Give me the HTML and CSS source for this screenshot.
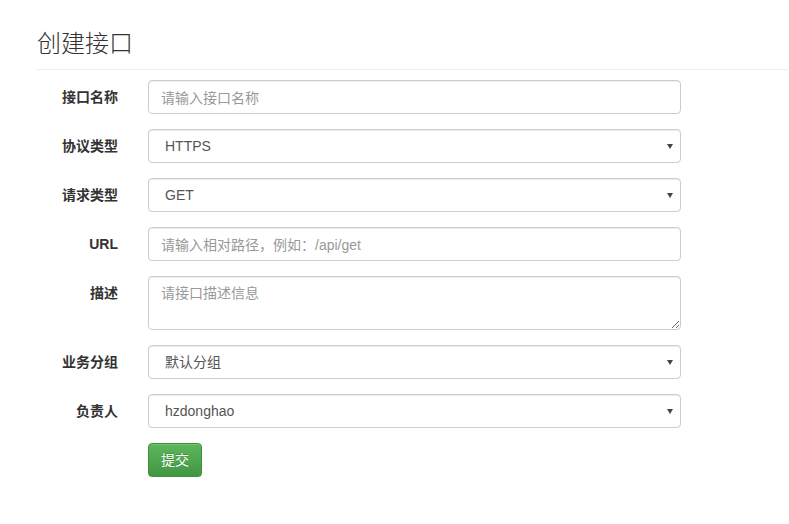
FILE: index.html
```html
<!DOCTYPE html>
<html lang="zh-CN">
<head>
<meta charset="utf-8">
<title>创建接口</title>
<link rel="stylesheet" href="styles.css">
</head>
<body>
<div class="page">
  <h1 class="page-header">创建接口</h1>
  <form class="form">
    <div class="row">
      <label class="label">接口名称</label>
      <div class="field"><input class="control" type="text" placeholder="请输入接口名称"></div>
    </div>
    <div class="row">
      <label class="label">协议类型</label>
      <div class="field select-wrap"><select class="control select"><option>HTTPS</option></select></div>
    </div>
    <div class="row">
      <label class="label">请求类型</label>
      <div class="field select-wrap"><select class="control select"><option>GET</option></select></div>
    </div>
    <div class="row">
      <label class="label">URL</label>
      <div class="field"><input class="control" type="text" placeholder="请输入相对路径，例如：/api/get"></div>
    </div>
    <div class="row">
      <label class="label">描述</label>
      <div class="field"><textarea class="control textarea" placeholder="请接口描述信息"></textarea></div>
    </div>
    <div class="row">
      <label class="label">业务分组</label>
      <div class="field select-wrap"><select class="control select"><option>默认分组</option></select></div>
    </div>
    <div class="row">
      <label class="label">负责人</label>
      <div class="field select-wrap"><select class="control select"><option>hzdonghao</option></select></div>
    </div>
    <div class="row">
      <div class="label"></div>
      <div class="field"><button type="button" class="btn">提交</button></div>
    </div>
  </form>
</div>
</body>
</html>
```

FILE: styles.css
```css
* { box-sizing: border-box; }
html, body { margin: 0; padding: 0; background: #fff; }
body {
  font-family: "Liberation Sans", Arial, "Noto Sans CJK SC", sans-serif;
  font-size: 14px;
  line-height: 1.42857;
  color: #333;
}
.page { padding: 20px 1px 0 36px; }
.page-header {
  margin: 0 0 10px 0;
  padding: 11px 0 8px 1px;
  font-size: 24px;
  font-weight: 300;
  line-height: 1.1;
  color: #333;
  border-bottom: 1px solid #eee;
  height: 50px;
}
.form { display: flex; flex-direction: column; gap: 15px; }
.row { display: flex; align-items: flex-start; }
.label {
  width: 97px;
  flex: none;
  padding: 8px 15px 0 0;
  text-align: right;
  font-weight: 700;
  margin-right: 15px;
}
.field { width: 533px; position: relative; }
.control {
  display: block;
  width: 100%;
  height: 34px;
  padding: 7px 12px 5px;
  font-family: "Liberation Sans", Arial, "Noto Sans CJK SC", sans-serif;
  font-size: 14px;
  line-height: 1.42857;
  color: #555;
  background: #fff;
  border: 1px solid #ccc;
  border-radius: 4px;
  box-shadow: inset 0 1px 1px rgba(0,0,0,.075);
  outline: none;
}
.control::placeholder { color: #999; }
.select { appearance: none; -webkit-appearance: none; padding-left: 16px; }
.select-wrap::after {
  content: "";
  position: absolute;
  right: 8px;
  top: 15px;
  border-left: 3px solid transparent;
  border-right: 3px solid transparent;
  border-top: 5px solid #444;
}
.textarea { height: 54px; resize: vertical; }
.btn {
  display: inline-block;
  height: 34px;
  padding: 7px 12px 5px;
  font-family: "Liberation Sans", Arial, "Noto Sans CJK SC", sans-serif;
  font-size: 14px;
  line-height: 1.42857;
  color: #fff;
  background-image: linear-gradient(to bottom, #5cb85c 0, #419641 100%);
  border: 1px solid #3e8f3e;
  border-radius: 4px;
  text-shadow: 0 -1px 0 rgba(0,0,0,.2);
  box-shadow: inset 0 1px 0 rgba(255,255,255,.15), 0 1px 1px rgba(0,0,0,.075);
  cursor: pointer;
}
```
